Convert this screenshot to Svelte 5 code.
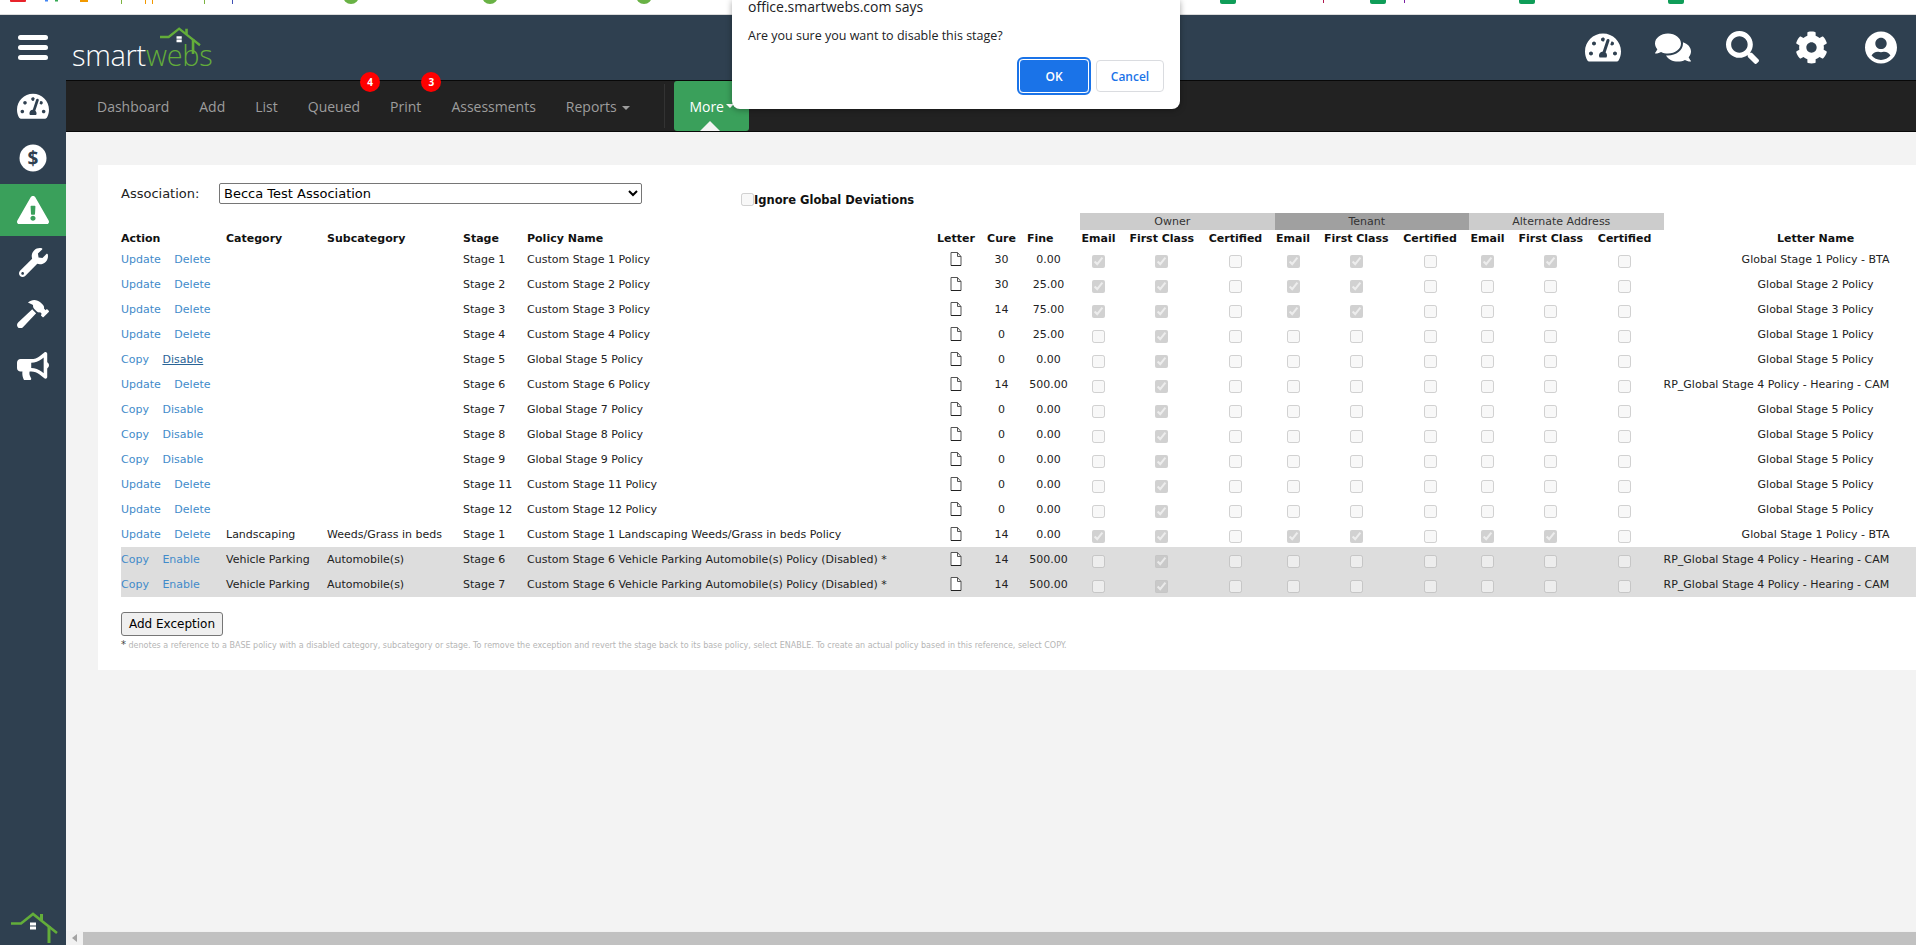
<script>
  const navItems = [
    { label: 'Dashboard' },
    { label: 'Add' },
    { label: 'List' },
    { label: 'Queued', badge: 4 },
    { label: 'Print', badge: 3 },
    { label: 'Assessments' },
    { label: 'Reports', caret: true }
  ]

  const BTA = 'Global Stage 1 Policy - BTA'
  const RP = 'RP_Global Stage 4 Policy - Hearing - CAM'
  const G5 = 'Global Stage 5 Policy'
  const own = ['Update', 'Delete']
  const glob = ['Copy', 'Disable']
  const dis = ['Copy', 'Enable']

  const allThree = [1, 1, 0, 1, 1, 0, 1, 1, 0]
  const twoGroups = [1, 1, 0, 1, 1, 0, 0, 0, 0]
  const firstOnly = [0, 1, 0, 0, 0, 0, 0, 0, 0]

  const rows = [
    { links: own, stage: 'Stage 1', policy: 'Custom Stage 1 Policy', cure: 30, fine: '0.00', checks: allThree, letter: BTA },
    { links: own, stage: 'Stage 2', policy: 'Custom Stage 2 Policy', cure: 30, fine: '25.00', checks: twoGroups, letter: 'Global Stage 2 Policy' },
    { links: own, stage: 'Stage 3', policy: 'Custom Stage 3 Policy', cure: 14, fine: '75.00', checks: twoGroups, letter: 'Global Stage 3 Policy' },
    { links: own, stage: 'Stage 4', policy: 'Custom Stage 4 Policy', cure: 0, fine: '25.00', checks: firstOnly, letter: 'Global Stage 1 Policy' },
    { links: glob, hover: true, stage: 'Stage 5', policy: 'Global Stage 5 Policy', cure: 0, fine: '0.00', checks: firstOnly, letter: G5 },
    { links: own, stage: 'Stage 6', policy: 'Custom Stage 6 Policy', cure: 14, fine: '500.00', checks: firstOnly, letter: RP },
    { links: glob, stage: 'Stage 7', policy: 'Global Stage 7 Policy', cure: 0, fine: '0.00', checks: firstOnly, letter: G5 },
    { links: glob, stage: 'Stage 8', policy: 'Global Stage 8 Policy', cure: 0, fine: '0.00', checks: firstOnly, letter: G5 },
    { links: glob, stage: 'Stage 9', policy: 'Global Stage 9 Policy', cure: 0, fine: '0.00', checks: firstOnly, letter: G5 },
    { links: own, stage: 'Stage 11', policy: 'Custom Stage 11 Policy', cure: 0, fine: '0.00', checks: firstOnly, letter: G5 },
    { links: own, stage: 'Stage 12', policy: 'Custom Stage 12 Policy', cure: 0, fine: '0.00', checks: firstOnly, letter: G5 },
    { links: own, category: 'Landscaping', sub: 'Weeds/Grass in beds', stage: 'Stage 1', policy: 'Custom Stage 1 Landscaping Weeds/Grass in beds Policy', cure: 14, fine: '0.00', checks: allThree, letter: BTA },
    { links: dis, disabled: true, category: 'Vehicle Parking', sub: 'Automobile(s)', stage: 'Stage 6', policy: 'Custom Stage 6 Vehicle Parking Automobile(s) Policy (Disabled) *', cure: 14, fine: '500.00', checks: firstOnly, letter: RP },
    { links: dis, disabled: true, category: 'Vehicle Parking', sub: 'Automobile(s)', stage: 'Stage 7', policy: 'Custom Stage 6 Vehicle Parking Automobile(s) Policy (Disabled) *', cure: 14, fine: '500.00', checks: firstOnly, letter: RP }
  ]

  const colWidths = [105, 101, 136, 64, 409, 50, 41, 53, 47, 79.5, 68, 47, 79.5, 68, 47, 79.5, 68, 314]
  const deliveryHeads = ['Email', 'First Class', 'Certified']

  const gauge = 'M288 32C128.94 32 0 160.94 0 320c0 52.8 14.25 102.26 39.06 144.8 5.61 9.62 16.3 15.2 27.44 15.2h443c11.14 0 21.83-5.58 27.44-15.2C561.75 422.26 576 372.8 576 320c0-159.06-128.94-288-288-288zm0 64c14.71 0 26.58 10.13 30.32 23.65-1.11 2.26-2.64 4.23-3.45 6.67l-9.22 27.67c-5.13 3.49-10.97 6.01-17.64 6.01-17.67 0-32-14.33-32-32S270.33 96 288 96zM96 384c-17.67 0-32-14.33-32-32s14.33-32 32-32 32 14.33 32 32-14.33 32-32 32zm48-160c-17.67 0-32-14.33-32-32s14.33-32 32-32 32 14.33 32 32-14.33 32-32 32zm246.77-72.41l-61.33 184C343.13 347.33 352 364.54 352 384c0 11.72-3.38 22.55-8.88 32H232.88c-5.5-9.45-8.88-20.28-8.88-32 0-33.94 26.5-61.43 59.9-63.59l61.34-184.01c4.17-12.56 17.73-19.45 30.36-15.17 12.57 4.19 19.35 17.79 15.17 30.36zm14.66 57.2l15.52-46.55c3.47-1.29 7.13-2.23 11.05-2.23 17.67 0 32 14.33 32 32s-14.33 32-32 32c-11.38-.01-20.89-6.28-26.57-15.22zM480 384c-17.67 0-32-14.33-32-32s14.33-32 32-32 32 14.33 32 32-14.33 32-32 32z'
  const warning = 'M569.517 440.013C587.975 472.007 564.806 512 527.94 512H48.054c-36.937 0-59.999-40.055-41.577-71.987L246.423 23.985c18.467-32.009 64.72-31.951 83.154 0l239.94 416.028zM288 354c-25.405 0-46 20.595-46 46s20.595 46 46 46 46-20.595 46-46-20.595-46-46-46zm-43.673-165.346l7.418 136c.347 6.364 5.609 11.346 11.982 11.346h48.546c6.373 0 11.635-4.982 11.982-11.346l7.418-136c.375-6.874-5.098-12.654-11.982-12.654h-63.383c-6.884 0-12.356 5.78-11.981 12.654z'
  const wrench = 'M507.73 109.1c-2.24-9.03-13.54-12.09-20.12-5.51l-74.36 74.36-67.88-11.31-11.31-67.88 74.36-74.36c6.62-6.62 3.43-17.9-5.66-20.16-47.38-11.74-99.55.91-136.58 37.93-39.64 39.64-50.55 97.1-34.05 147.2L18.74 402.76c-24.99 24.99-24.99 65.51 0 90.5 24.99 24.99 65.51 24.99 90.5 0l213.21-213.21c50.12 16.71 107.47 5.68 147.37-34.22 37.07-37.07 49.7-89.32 37.91-136.73zM64 472c-13.25 0-24-10.75-24-24 0-13.26 10.75-24 24-24s24 10.74 24 24c0 13.25-10.75 24-24 24z'
  const hammer = 'M571.31 193.94l-22.63-22.63c-6.25-6.25-16.38-6.25-22.63 0l-11.31 11.31-28.9-28.9c5.63-21.31.36-44.9-16.35-61.61l-45.25-45.25c-62.48-62.48-163.79-62.48-226.28 0l90.51 45.25v18.75c0 16.97 6.74 33.25 18.75 45.25l49.14 49.14c16.71 16.71 40.3 21.98 61.61 16.35l28.9 28.9-11.31 11.31c-6.25 6.25-6.25 16.38 0 22.63l22.63 22.63c6.25 6.25 16.38 6.25 22.63 0l90.51-90.51c6.23-6.24 6.23-16.37-.02-22.62zm-286.72-15.2c-3.7-3.7-6.84-7.79-9.85-11.95L19.64 404.96c-25.57 23.88-26.26 64.19-1.53 88.93s65.05 24.05 88.93-1.53l238.13-255.07c-3.96-2.91-7.9-5.87-11.44-9.41l-49.14-49.14z'
  const bullhorn = 'M576 240c0-23.63-12.95-44.04-32-55.12V32.01C544 23.26 537.02 0 512 0c-7.12 0-14.19 2.38-19.98 7.02l-85.03 68.03C364.28 109.19 310.66 128 256 128H64c-35.35 0-64 28.65-64 64v96c0 35.35 28.65 64 64 64h33.7c-1.39 10.48-2.18 21.14-2.18 32 0 39.77 9.26 77.35 25.56 110.94 5.19 10.69 16.52 17.06 28.4 17.06h74.28c26.05 0 41.69-29.84 25.9-50.56-16.4-21.52-26.15-48.36-26.15-77.44 0-11.11 1.62-21.79 4.41-32H256c54.66 0 108.28 18.81 150.98 52.95l85.03 68.03a32.023 32.023 0 0 0 19.98 7.02c24.92 0 32-22.78 32-32V295.13C563.05 284.04 576 263.63 576 240zm-96 141.42l-33.05-26.44C392.95 311.78 325.12 288 256 288v-96c69.12 0 136.95-23.78 190.95-66.98L480 98.58v282.84z'
  const comments = 'M416 192c0-88.4-93.1-160-208-160S0 103.6 0 192c0 34.3 14.1 65.9 38 92-13.4 30.2-35.5 54.2-35.8 54.5-2.2 2.3-2.8 5.7-1.5 8.7S4.8 352 8 352c36.6 0 66.9-12.3 88.7-25 32.2 15.7 70.3 25 111.3 25 114.9 0 208-71.6 208-160zm122 220c23.9-26 38-57.7 38-92 0-66.9-53.5-124.2-129.3-148.1.9 6.6 1.3 13.3 1.3 20.1 0 105.9-107.7 192-240 192-10.8 0-21.3-.8-31.7-1.9C207.8 439.6 281.8 480 368 480c41 0 79.1-9.2 111.3-25 21.8 12.7 52.1 25 88.7 25 3.2 0 6.1-1.9 7.3-4.8 1.3-2.9.7-6.3-1.5-8.7-.3-.3-22.4-24.2-35.8-54.5z'
  const search = 'M505 442.7L405.3 343c-4.5-4.5-10.6-7-17-7H372c27.6-35.3 44-79.7 44-128C416 93.1 322.9 0 208 0S0 93.1 0 208s93.1 208 208 208c48.3 0 92.7-16.4 128-44v16.3c0 6.4 2.5 12.5 7 17l99.7 99.7c9.4 9.4 24.6 9.4 33.9 0l28.3-28.3c9.4-9.4 9.4-24.6.1-34zM208 336c-70.7 0-128-57.2-128-128 0-70.7 57.2-128 128-128 70.7 0 128 57.2 128 128 0 70.7-57.2 128-128 128z'
  const cog = 'M487.4 315.7l-42.6-24.6c4.3-23.2 4.3-47 0-70.2l42.6-24.6c4.9-2.8 7.1-8.6 5.5-14-11.1-35.6-30-67.8-54.7-94.6-3.8-4.1-10-5.1-14.8-2.3L380.8 110c-17.9-15.4-38.5-27.3-60.8-35.1V25.8c0-5.6-3.9-10.5-9.4-11.7-36.7-8.2-74.3-7.8-109.2 0-5.5 1.2-9.4 6.1-9.4 11.7V75c-22.2 7.9-42.8 19.8-60.8 35.1L88.7 85.5c-4.9-2.8-11-1.9-14.8 2.3-24.7 26.7-43.6 58.9-54.7 94.6-1.7 5.4.6 11.2 5.5 14L67.3 221c-4.3 23.2-4.3 47 0 70.2l-42.6 24.6c-4.9 2.8-7.1 8.6-5.5 14 11.1 35.6 30 67.8 54.7 94.6 3.8 4.1 10 5.1 14.8 2.3l42.6-24.6c17.9 15.4 38.5 27.3 60.8 35.1v49.2c0 5.6 3.9 10.5 9.4 11.7 36.7 8.2 74.3 7.8 109.2 0 5.5-1.2 9.4-6.1 9.4-11.7v-49.2c22.2-7.9 42.8-19.8 60.8-35.1l42.6 24.6c4.9 2.8 11 1.9 14.8-2.3 24.7-26.7 43.6-58.9 54.7-94.6 1.5-5.5-.7-11.3-5.6-14.1zM256 336c-44.1 0-80-35.9-80-80s35.9-80 80-80 80 35.9 80 80-35.9 80-80 80z'
  const userCircle = 'M248 8C111 8 0 119 0 256s111 248 248 248 248-111 248-248S385 8 248 8zm0 96c48.6 0 88 39.4 88 88s-39.4 88-88 88-88-39.4-88-88 39.4-88 88-88zm0 344c-58.7 0-111.3-26.6-146.5-68.2 18.8-35.4 55.6-59.8 98.5-59.8 2.4 0 4.8.4 7.1 1.1 13 4.2 26.6 6.9 40.9 6.9 14.3 0 28-2.7 40.9-6.9 2.3-.7 4.7-1.1 7.1-1.1 42.9 0 79.7 24.4 98.5 59.8C359.3 421.4 306.7 448 248 448z'

  const topIcons = [
    { d: gauge, box: '0 0 576 512', w: 36 },
    { d: comments, box: '0 0 576 512', w: 36 },
    { d: search, box: '0 0 512 512', w: 33 },
    { d: cog, box: '0 0 512 512', w: 33 },
    { d: userCircle, box: '0 0 496 512', w: 32 }
  ]
  const sideIcons = [
    { d: gauge, box: '0 0 576 512', w: 32 },
    { dollar: true },
    { d: warning, box: '0 0 576 512', w: 32, active: true },
    { d: wrench, box: '0 0 512 512', w: 29 },
    { d: hammer, box: '0 0 576 512', w: 32 },
    { d: bullhorn, box: '0 0 576 512', w: 32 }
  ]
</script>

{#snippet house(w)}
  <svg class="house" width={w} viewBox="0 0 46 30" fill="none">
    <path d="M0 11.5h10L22 2l24 19" stroke="#63ad3a" stroke-width="2.6" />
    <path d="M38 14v17" stroke="#63ad3a" stroke-width="3" />
    <path d="M29 2h3v6h-3z" fill="#63ad3a" />
    <path d="M19 10.5h6v3h-6zM19 14.5h6v3h-6z" fill="#fff" />
  </svg>
{/snippet}

<div class="page">
  <svg class="bookmarks" width="1916" height="14" viewBox="0 0 1916 14">
    <rect x="10" y="-2" width="16" height="4" rx="1" fill="#e8232a" />
    <rect x="45" y="0" width="3" height="1.5" fill="#4285f4" />
    <rect x="55" y="0" width="3" height="1.5" fill="#34a853" />
    <rect x="80" y="0" width="8" height="2" fill="#f29900" />
    <rect x="121" y="0" width="1" height="4" fill="#7cb342" />
    <rect x="145" y="0" width="1" height="4" fill="#f29900" />
    <rect x="152" y="0" width="1" height="4" fill="#f29900" />
    <rect x="204" y="0" width="1" height="4" fill="#7cb342" />
    <rect x="232" y="0" width="1" height="4" fill="#3f51b5" />
    <circle cx="351" cy="-4" r="8" fill="#69b245" />
    <circle cx="490" cy="-4" r="8" fill="#69b245" />
    <circle cx="644" cy="-4" r="8" fill="#69b245" />
    <rect x="1220" y="-4" width="16" height="8" rx="2" fill="#0f9d58" />
    <rect x="1323" y="0" width="1" height="3" fill="#b0174f" />
    <rect x="1370" y="-4" width="16" height="8" rx="2" fill="#0f9d58" />
    <rect x="1404" y="0" width="1" height="3" fill="#7b1fa2" />
    <rect x="1519" y="-4" width="16" height="8" rx="2" fill="#0f9d58" />
    <rect x="1668" y="-4" width="16" height="8" rx="2" fill="#0f9d58" />
  </svg>

  <div class="shell">
    <aside class="sidebar">
      <div class="burger"><span></span><span></span><span></span></div>
      {#each sideIcons as item}
        <div class="side-item" class:active={item.active}>
          {#if item.dollar}
            <svg width="28" height="28" viewBox="0 0 28 28">
              <circle cx="14" cy="14" r="13.5" fill="#fff" />
              <text x="14" y="20.5" text-anchor="middle" font-size="19" font-weight="700" font-family="'Open Sans', sans-serif" fill="#2f4050">$</text>
            </svg>
          {:else}
            <svg width={item.w} viewBox={item.box} fill="#fff"><path d={item.d} /></svg>
          {/if}
        </div>
      {/each}
      <div class="side-logo">{@render house(46)}</div>
    </aside>

    <div class="main">
      <header class="topbar">
        <div class="logo">
          {@render house(40)}
          <span class="logo-text">smart<b>webs</b></span>
        </div>
        <div class="top-icons">
          {#each topIcons as icon}
            <span class="top-icon">
              <svg width={icon.w} viewBox={icon.box} fill="#fff"><path d={icon.d} /></svg>
            </span>
          {/each}
        </div>
      </header>

      <nav class="navbar">
        {#each navItems as item}
          <span class="nav-link">
            {item.label}
            {#if item.caret}<i class="caret"></i>{/if}
            {#if item.badge}<em class="badge">{item.badge}</em>{/if}
          </span>
        {/each}
        <span class="nav-sep"></span>
        <span class="nav-more">More<i class="caret"></i></span>
      </nav>

      <div class="content">
        <div class="card">
          <div class="assoc-row">
            <label class="assoc" for="assoc">Association:</label>
            <select id="assoc" class="assoc-select">
              <option>Becca Test Association</option>
            </select>
            <span class="ignore"><input type="checkbox" disabled /><b>Ignore Global Deviations</b></span>
          </div>

          <table class="policies">
            <colgroup>
              {#each colWidths as w}<col style="width: {w}px" />{/each}
            </colgroup>
            <thead>
              <tr class="bands">
                <th colspan="8"></th>
                <th colspan="3" class="band">Owner</th>
                <th colspan="3" class="band dark">Tenant</th>
                <th colspan="3" class="band">Alternate Address</th>
                <th></th>
              </tr>
              <tr class="heads">
                <th>Action</th>
                <th>Category</th>
                <th>Subcategory</th>
                <th>Stage</th>
                <th>Policy Name</th>
                <th class="mid">Letter</th>
                <th class="mid">Cure</th>
                <th>Fine</th>
                {#each [0, 1, 2] as group}
                  {#each deliveryHeads as head}<th class="mid">{head}</th>{/each}
                {/each}
                <th class="mid">Letter Name</th>
              </tr>
            </thead>
            <tbody>
              {#each rows as row}
                <tr class:disabled={row.disabled}>
                  <td>
                    <a href="#top" class:hovered={row.hover}>{row.links[0]}</a>
                    <a href="#top" class="second" class:hovered={row.hover}>{row.links[1]}</a>
                  </td>
                  <td>{row.category ?? ''}</td>
                  <td>{row.sub ?? ''}</td>
                  <td>{row.stage}</td>
                  <td>{row.policy}</td>
                  <td class="mid">
                    <svg class="doc" width="12" height="14" viewBox="0 0 12 14" fill="none">
                      <path d="M1 .5h6.5L11 4.5v9H1z" fill="#fff" stroke="#555" />
                      <path d="M7.5.5v4H11" stroke="#555" />
                      <path d="M1 13.5h10" stroke="#222" />
                    </svg>
                  </td>
                  <td class="mid">{row.cure}</td>
                  <td class="mid">{row.fine}</td>
                  {#each row.checks as on}
                    <td class="mid"><input type="checkbox" disabled checked={on === 1} /></td>
                  {/each}
                  <td class="mid" class:clip={row.letter === RP}>{row.letter}</td>
                </tr>
              {/each}
            </tbody>
          </table>

          <button class="add-btn">Add Exception</button>
          <p class="note"><span>*</span> denotes a reference to a BASE policy with a disabled category, subcategory or stage. To remove the exception and revert the stage back to its base policy, select ENABLE. To create an actual policy based in this reference, select COPY.</p>
        </div>
      </div>

      <div class="hscroll">
        <span class="arrow"></span>
        <span class="thumb"></span>
      </div>
    </div>
  </div>

  <div class="dialog" role="alertdialog">
    <div class="dialog-title">office.smartwebs.com says</div>
    <div class="dialog-msg">Are you sure you want to disable this stage?</div>
    <div class="dialog-actions">
      <button class="ok">OK</button>
      <button class="cancel">Cancel</button>
    </div>
  </div>
</div>

<style>
  :global(body) {
    margin: 0;
    background: #f3f3f3;
  }

  .page {
    position: relative;
    width: 1916px;
    height: 945px;
    overflow: hidden;
    display: flex;
    flex-direction: column;
    font-family: "DejaVu Sans", Verdana, sans-serif;
  }

  .bookmarks {
    display: block;
    flex-shrink: 0;
    background: #fff;
    border-bottom: 1px solid #dcdcdc;
  }

  .shell {
    flex: 1;
    display: flex;
    min-height: 0;
  }

  .sidebar {
    width: 66px;
    flex-shrink: 0;
    background: #2f4050;
    display: flex;
    flex-direction: column;
  }

  .burger {
    height: 65px;
    display: flex;
    flex-direction: column;
    justify-content: center;
    align-items: center;
    gap: 5px;
  }

  .burger span {
    width: 30px;
    height: 5px;
    border-radius: 2.5px;
    background: #fff;
  }

  .side-item {
    height: 52px;
    display: flex;
    align-items: center;
    justify-content: center;
  }

  .side-item svg {
    display: block;
  }

  .side-item.active {
    background: #3aa05b;
  }

  .side-logo {
    margin-top: auto;
    padding: 0 0 3px 11px;
  }

  .house {
    display: block;
    overflow: visible;
  }

  .main {
    flex: 1;
    min-width: 0;
    display: flex;
    flex-direction: column;
  }

  .topbar {
    height: 65px;
    flex-shrink: 0;
    background: #2f4050;
    display: flex;
    align-items: center;
    justify-content: space-between;
  }

  .logo {
    position: relative;
    padding: 25px 0 0 6px;
    height: 40px;
  }

  .logo .house {
    position: absolute;
    left: 94px;
    top: 12px;
  }

  .logo-text {
    font-family: "Open Sans", sans-serif;
    font-weight: 300;
    font-size: 29px;
    line-height: 30px;
    color: #fff;
    letter-spacing: -0.3px;
  }

  .logo-text b {
    font-weight: 300;
    color: #63ad3a;
  }

  .top-icons {
    display: flex;
  }

  .top-icon {
    width: 69.5px;
    display: flex;
    justify-content: center;
  }

  .top-icon svg {
    display: block;
  }

  .navbar {
    height: 50px;
    flex-shrink: 0;
    background: #222;
    border-top: 1px solid #080808;
    border-bottom: 1px solid #080808;
    display: flex;
    align-items: center;
    padding-left: 31px;
    gap: 30px;
    font-family: "Open Sans", sans-serif;
    font-size: 14px;
    color: #9d9d9d;
  }

  .nav-link {
    position: relative;
    white-space: nowrap;
  }

  .caret {
    display: inline-block;
    width: 0;
    height: 0;
    margin-left: 2px;
    vertical-align: middle;
    border-top: 4px solid currentColor;
    border-left: 4px solid transparent;
    border-right: 4px solid transparent;
  }

  .badge {
    position: absolute;
    left: 100%;
    top: -25px;
    width: 20px;
    height: 20px;
    border-radius: 50%;
    background: #f00;
    color: #fff;
    font-style: normal;
    font-weight: 700;
    font-size: 10px;
    line-height: 20px;
    text-align: center;
  }

  .nav-sep {
    width: 1px;
    height: 44px;
    margin-left: 4px;
    background: #333;
  }

  .nav-more {
    position: relative;
    margin-left: -21px;
    height: 50px;
    padding: 0 15px;
    display: flex;
    align-items: center;
    color: #fff;
    background: #3aa05b;
    border-radius: 3px;
  }

  .nav-more::after {
    content: "";
    position: absolute;
    left: 26px;
    bottom: 0;
    border-left: 10px solid transparent;
    border-right: 10px solid transparent;
    border-bottom: 10px solid #f3f3f3;
  }

  .content {
    flex: 1;
    min-height: 0;
    padding: 33px 0 0 32px;
    background: #f3f3f3;
  }

  .card {
    height: 505px;
    box-sizing: border-box;
    padding: 18px 0 0 23px;
    background: #fff;
    overflow: hidden;
    font-size: 11px;
    color: #222;
  }

  .assoc-row {
    display: flex;
    align-items: center;
    height: 21px;
    margin-bottom: 9px;
  }

  .assoc {
    width: 98px;
    flex-shrink: 0;
    font-size: 13px;
  }

  .assoc-select {
    width: 423px;
    height: 21px;
    padding: 0;
    font-family: "DejaVu Sans", Verdana, sans-serif;
    font-size: 13px;
    color: #000;
    background: #fff;
    border: 1px solid #767676;
    border-radius: 2px;
  }

  .ignore {
    display: flex;
    align-items: center;
    margin: 12px 0 0 99px;
    font-size: 11.5px;
    color: #111;
  }

  .ignore input {
    margin: 0;
    width: 13px;
    height: 13px;
  }

  .policies {
    table-layout: fixed;
    width: 1856.5px;
    border-collapse: collapse;
  }

  .policies th,
  .policies td {
    padding: 0 10px 0 0;
    white-space: nowrap;
    text-align: left;
    overflow: visible;
  }

  .policies th.mid,
  .policies td.mid {
    text-align: center;
  }

  .policies td.clip {
    text-align: left;
  }

  .bands th {
    height: 17px;
    font-weight: 400;
  }

  .policies th.band {
    text-align: center;
    background: #ccc;
    color: #333;
  }

  .policies th.band.dark {
    background: #a0a0a0;
  }

  .heads th {
    height: 17px;
    font-weight: 700;
    color: #111;
  }

  tbody tr {
    height: 25px;
  }

  tbody tr.disabled {
    background: #ddd;
  }

  tbody a {
    color: #428bca;
    text-decoration: none;
  }

  tbody a.second {
    margin-left: 10px;
  }

  tbody a.hovered.second {
    color: #2a6496;
    text-decoration: underline;
  }

  tbody input {
    display: block;
    margin: 3px auto 0;
    width: 13px;
    height: 13px;
  }

  .doc {
    display: block;
    margin: -1px auto 0;
  }

  .add-btn {
    display: block;
    margin-top: 15px;
    width: 102px;
    height: 24px;
    padding: 0;
    font-family: inherit;
    font-size: 12px;
    color: #000;
    background: #efefef;
    border: 1px solid #767676;
    border-radius: 3px;
  }

  .note {
    margin: 2px 0 0;
    font-size: 8px;
    line-height: 14px;
    color: #b5b5b5;
    white-space: nowrap;
  }

  .note span {
    color: #444;
    font-size: 10px;
  }

  .hscroll {
    height: 14px;
    flex-shrink: 0;
    display: flex;
    align-items: center;
    background: #f1f1f1;
  }

  .arrow {
    margin-left: 6px;
    border-top: 4px solid transparent;
    border-bottom: 4px solid transparent;
    border-right: 5px solid #a3a3a3;
  }

  .thumb {
    margin-left: 6px;
    flex: 1;
    height: 13px;
    background: #c1c1c1;
  }

  .dialog {
    position: absolute;
    left: 732px;
    top: 0;
    width: 448px;
    height: 109px;
    box-sizing: border-box;
    padding: 0 16px;
    background: #fff;
    border-radius: 0 0 8px 8px;
    box-shadow: 0 1px 6px rgba(0, 0, 0, 0.35);
    font-family: "Open Sans", "Noto Sans", sans-serif;
    color: #202124;
  }

  .dialog-title {
    font-size: 14px;
    line-height: 16px;
    margin-top: -1px;
  }

  .dialog-msg {
    margin-top: 12px;
    font-size: 12.5px;
    line-height: 17px;
  }

  .dialog-actions {
    display: flex;
    justify-content: flex-end;
    gap: 7px;
    margin-top: 15px;
  }

  .dialog button {
    font-family: inherit;
    font-size: 12px;
    font-weight: 600;
    border-radius: 4px;
    padding: 0;
  }

  .ok {
    width: 70px;
    height: 34px;
    color: #fff;
    background: #1a73e8;
    border: 1px solid #fff;
    outline: 2px solid #1a73e8;
    outline-offset: 0;
  }

  .cancel {
    width: 68px;
    height: 32px;
    margin-top: 1px;
    color: #1a73e8;
    background: #fff;
    border: 1px solid #dadce0;
  }
</style>
